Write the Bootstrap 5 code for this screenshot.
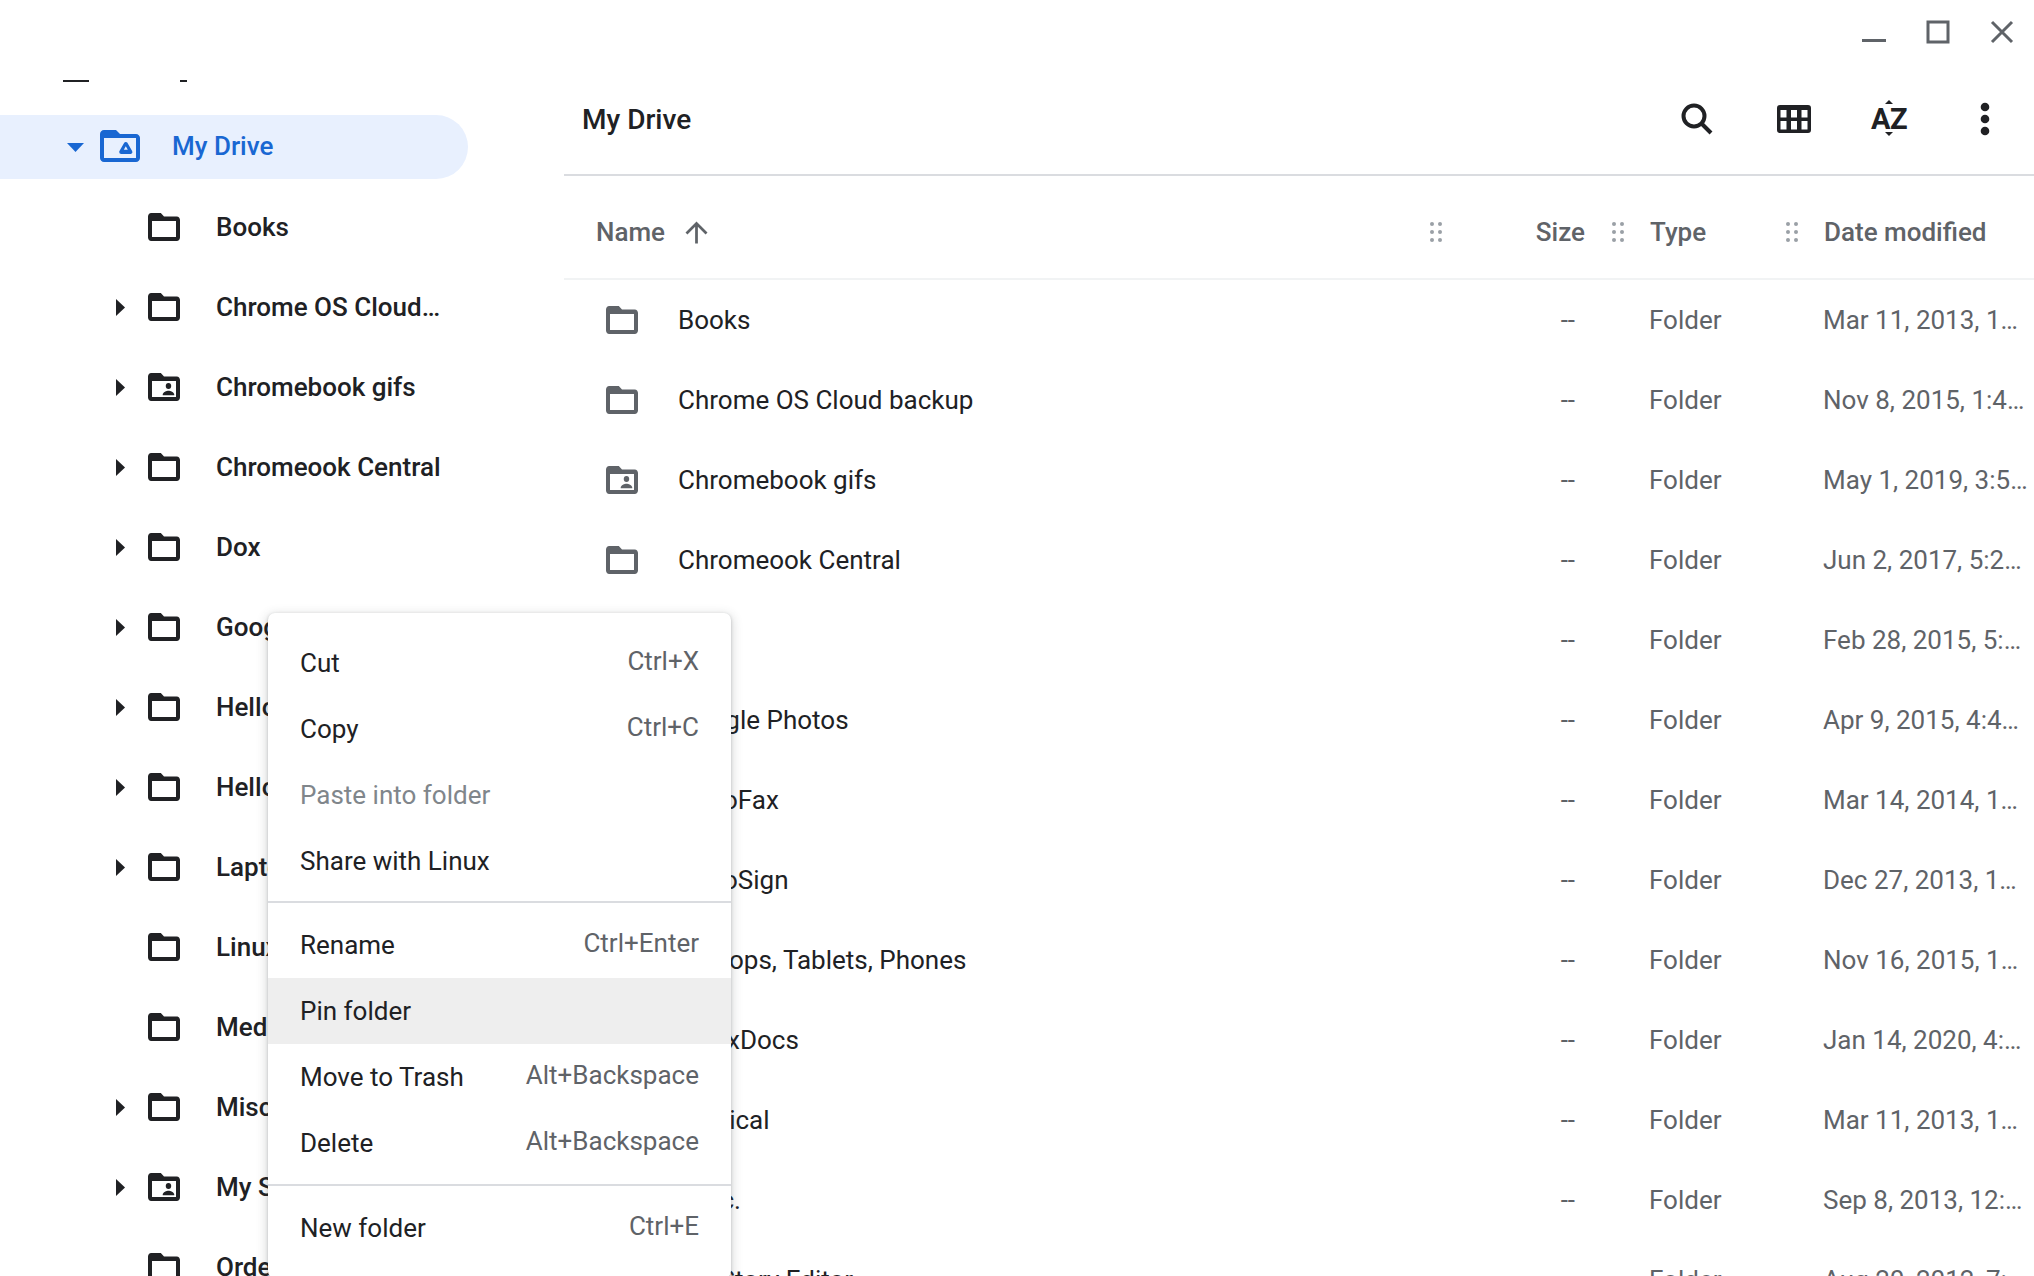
<!DOCTYPE html>
<html lang="en">
<head>
<meta charset="utf-8">
<title>My Drive</title>
<link href="https://cdn.jsdelivr.net/npm/bootstrap@5.3.0/dist/css/bootstrap.min.css" rel="stylesheet">
<style>
html,body{height:100%;overflow:hidden;background:#fff}
body{font-family:Roboto,"Liberation Sans",sans-serif;font-size:26px;color:#202124;line-height:1.2}
.shell{height:1276px}
.tree{width:564px;color:#202124;font-weight:500}
.stub{margin-top:80px;height:2px}
.stub i{display:block;height:2px;background:#202124}
.stub-a{width:26px;margin-left:63px}
.stub-b{width:7px;margin-left:91px}
.drive-row{height:64px;width:468px;margin-top:33px;margin-bottom:8px;padding-left:67px;background:#e8f0fe;color:#1967d2;border-radius:0 32px 32px 0}
.drive-label{margin-left:32px}
.drive-caret{width:17px;height:9px;margin-right:16px}
.drive-ico{width:40px;height:32px;margin-top:-2px}
.node{height:80px;padding-left:116px}
.node-caret{width:9px;height:17px;flex:none;margin-right:23px}
.node-ico{width:32px;height:28px;flex:none;margin-right:36px}
.node-label{max-width:227px;padding-top:2px}
.pane{min-width:0}
.winbar{height:64px}
.winbtn{width:64px;height:64px}
.winbtn svg{width:24px;height:24px;color:#5f6368}
.toolbar{height:112px;padding-left:18px;border-bottom:2px solid #dadce0}
.pane-title{font-weight:500;margin-bottom:0;font-size:28px;padding-top:2px}
.tool{width:96px;height:64px}
.tool-bar-end{margin-right:1px}
.ic-search{width:32px;height:32px}
.ic-grid{width:34px;height:28px;margin-left:2px}
.ic-dots{width:10px;height:34px}
.sort-az{font-weight:700;font-size:29px;letter-spacing:-.5px;line-height:28px;height:28px}
.sort-az::before,.sort-az::after{content:"";position:absolute;left:50%;margin-left:-4px;border:4px solid transparent}
.sort-az::before{top:-5px;border-bottom:4px solid #202124;border-top:0}
.sort-az::after{bottom:-3px;border-top:4px solid #202124;border-bottom:0}
.head-row{height:104px;padding-top:10px;border-bottom:2px solid #f1f3f4;color:#5f6368;font-weight:500}
.head-txt{padding-top:2px}
.file-row{height:80px;color:#5f6368}
.cell-name{width:916px;flex:none}
.cell-size{width:121px;flex:none}
.cell-type{width:174px;flex:none}
.cell-date{width:259px;flex:none;min-width:0}
.head-name{padding-left:32px}
.head-size{padding-right:16px}
.grip{width:12px;height:20px;color:#9aa0a6;flex:none}
.grip-gap{margin-left:11px;margin-right:26px}
.grip-last{margin-right:38px}
.sort-up{width:33px;height:33px;margin-left:15px;color:#5f6368}
.file-ico{width:32px;height:28px;margin-left:42px;margin-right:40px;flex:none;color:#5f6368}
.file-label{color:#202124;padding-top:2px}
.dash{padding-right:26px;padding-top:2px}
.type-txt{padding-left:48px;padding-top:2px}
.date-txt{padding-left:48px;padding-right:6px;padding-top:2px}
.ctx-menu.dropdown-menu{position:absolute;left:268px;top:613px;width:463px;height:665px;padding:17px 0;margin:0;border:0;border-radius:7px;font-size:26px;color:#202124;box-shadow:0 1px 3px rgba(60,64,67,.3),0 3px 10px 3px rgba(60,64,67,.15)}
.ctx-menu .dropdown-item{height:66px;padding:0 32px;color:#202124}
.ctx-menu .dropdown-item span{padding-top:2px}
.ctx-menu .dropdown-item.disabled{color:#80868b}
.ctx-menu .dropdown-item.hot{background:#eeeeee;color:#202124}
.ctx-menu .dropdown-divider{margin:7px 0 9px;border-top:2px solid #dadce0;opacity:1}
.ctx-menu .dropdown-divider:last-of-type{margin:8px 0 9px}
.ctx-menu .dropdown-item .keys{color:#5f6368;margin-bottom:4px}
</style>
</head>
<body>
<svg width="0" height="0" class="position-absolute">
  <symbol id="folder" viewBox="2 4 20 16" preserveAspectRatio="none"><path fill="currentColor" fill-rule="evenodd" d="M10 4H4c-1.100 0-2 .9-2 2v12c0 1.100.9 2 2 2h16c1.100 0 2-.9 2-2V8c0-1.100-.9-2-2-2h-8l-2-2zM19.500 17.700H4.500V8.600h15z"/></symbol>
  <symbol id="shared" viewBox="2 4 20 16" preserveAspectRatio="none"><path fill="currentColor" fill-rule="evenodd" d="M10 4H4c-1.100 0-2 .9-2 2v12c0 1.100.9 2 2 2h16c1.100 0 2-.9 2-2V8c0-1.100-.9-2-2-2h-8l-2-2zM19.500 17.700H4.500V8.600h15z"/><circle fill="currentColor" cx="14.800" cy="11.400" r="1.700"/><path fill="currentColor" d="M11.200 16.300c0-1.500 2.500-2.200 3.600-2.200s3.600.7 3.600 2.200v.4h-7.200z"/></symbol>
  <symbol id="caret" viewBox="0 0 9 17"><path fill="currentColor" d="M0 0l9 8.500L0 17z"/></symbol>
  <symbol id="grip" viewBox="0 0 12 20"><g fill="currentColor"><circle cx="2" cy="2" r="2"/><circle cx="10" cy="2" r="2"/><circle cx="2" cy="10" r="2"/><circle cx="10" cy="10" r="2"/><circle cx="2" cy="18" r="2"/><circle cx="10" cy="18" r="2"/></g></symbol>
</svg>

<div class="shell d-flex overflow-hidden position-relative">
  <nav class="tree flex-shrink-0 overflow-hidden">
    <div class="stub"><i class="stub-a float-start"></i><i class="stub-b float-start"></i></div>
    <div class="drive-row d-flex align-items-center">
      <svg class="drive-caret" viewBox="0 0 17 9"><path fill="currentColor" d="M0 0h17L8.500 9z"/></svg>
      <svg class="drive-ico" viewBox="2 4 20 16"><path fill="currentColor" fill-rule="evenodd" d="M10 4H4c-1.100 0-2 .9-2 2v12c0 1.100.9 2 2 2h16c1.100 0 2-.9 2-2V8c0-1.100-.9-2-2-2h-8l-2-2zM20 18H4V8h16z"/><path fill="currentColor" stroke="currentColor" stroke-width="2" stroke-linejoin="round" d="M14.900 11l2.300 4h-4.600z"/><path fill="#e8f0fe" d="M14.900 12.100l1 1.800h-2z"/></svg>
      <span class="drive-label">My Drive</span>
    </div>
    <div class="node d-flex align-items-center"><span class="node-caret"></span><svg class="node-ico"><use href="#folder"/></svg><span class="node-label text-truncate">Books</span></div>
    <div class="node d-flex align-items-center"><svg class="node-caret"><use href="#caret"/></svg><svg class="node-ico"><use href="#folder"/></svg><span class="node-label text-truncate">Chrome OS Cloud backup</span></div>
    <div class="node d-flex align-items-center"><svg class="node-caret"><use href="#caret"/></svg><svg class="node-ico"><use href="#shared"/></svg><span class="node-label text-truncate">Chromebook gifs</span></div>
    <div class="node d-flex align-items-center"><svg class="node-caret"><use href="#caret"/></svg><svg class="node-ico"><use href="#folder"/></svg><span class="node-label text-truncate">Chromeook Central</span></div>
    <div class="node d-flex align-items-center"><svg class="node-caret"><use href="#caret"/></svg><svg class="node-ico"><use href="#folder"/></svg><span class="node-label text-truncate">Dox</span></div>
    <div class="node d-flex align-items-center"><svg class="node-caret"><use href="#caret"/></svg><svg class="node-ico"><use href="#folder"/></svg><span class="node-label text-truncate">Google Photos</span></div>
    <div class="node d-flex align-items-center"><svg class="node-caret"><use href="#caret"/></svg><svg class="node-ico"><use href="#folder"/></svg><span class="node-label text-truncate">HelloFax</span></div>
    <div class="node d-flex align-items-center"><svg class="node-caret"><use href="#caret"/></svg><svg class="node-ico"><use href="#folder"/></svg><span class="node-label text-truncate">HelloSign</span></div>
    <div class="node d-flex align-items-center"><svg class="node-caret"><use href="#caret"/></svg><svg class="node-ico"><use href="#folder"/></svg><span class="node-label text-truncate">Laptops, Tablets, Phones</span></div>
    <div class="node d-flex align-items-center"><span class="node-caret"></span><svg class="node-ico"><use href="#folder"/></svg><span class="node-label text-truncate">LinuxDocs</span></div>
    <div class="node d-flex align-items-center"><span class="node-caret"></span><svg class="node-ico"><use href="#folder"/></svg><span class="node-label text-truncate">Medical</span></div>
    <div class="node d-flex align-items-center"><svg class="node-caret"><use href="#caret"/></svg><svg class="node-ico"><use href="#folder"/></svg><span class="node-label text-truncate">Misc.</span></div>
    <div class="node d-flex align-items-center"><svg class="node-caret"><use href="#caret"/></svg><svg class="node-ico"><use href="#shared"/></svg><span class="node-label text-truncate">My Story Editor</span></div>
    <div class="node d-flex align-items-center"><span class="node-caret"></span><svg class="node-ico"><use href="#folder"/></svg><span class="node-label text-truncate">Orders</span></div>
  </nav>

  <main class="pane flex-grow-1 d-flex flex-column overflow-hidden">
    <div class="winbar d-flex justify-content-end flex-shrink-0">
      <div class="winbtn d-flex align-items-center justify-content-center"><svg viewBox="0 0 24 24"><rect fill="currentColor" x="0" y="19" width="24" height="3"/></svg></div>
      <div class="winbtn d-flex align-items-center justify-content-center"><svg viewBox="0 0 24 24"><rect fill="none" stroke="currentColor" stroke-width="3" x="2" y="2" width="20" height="20"/></svg></div>
      <div class="winbtn d-flex align-items-center justify-content-center"><svg viewBox="0 0 24 24"><path fill="none" stroke="currentColor" stroke-width="3" d="M2 2l20 20M22 2L2 22"/></svg></div>
    </div>
    <header class="toolbar d-flex align-items-center flex-shrink-0">
      <h1 class="pane-title">My Drive</h1>
      <div class="d-flex align-items-center ms-auto tool-bar-end">
        <div class="tool d-flex align-items-center justify-content-center"><svg class="ic-search" viewBox="0 0 32 32"><circle cx="13" cy="13" r="10.500" fill="none" stroke="#202124" stroke-width="4"/><path d="M20.500 20.500L30 30" fill="none" stroke="#202124" stroke-width="4"/></svg></div>
        <div class="tool d-flex align-items-center justify-content-center"><svg class="ic-grid" viewBox="0 0 34 28"><path fill="#202124" fill-rule="evenodd" d="M3 0h28a3 3 0 0 1 3 3v22a3 3 0 0 1-3 3H3a3 3 0 0 1-3-3V3a3 3 0 0 1 3-3zM3.500 5v7.500h6V5zm10.500 0v7.500h6V5zm10.500 0v7.500h6V5zM3.500 16v8.500h6V16zM14 16v8.500h6V16zm10.500 0v8.500h6V16z"/></svg></div>
        <div class="tool d-flex align-items-center justify-content-center"><span class="sort-az position-relative">AZ</span></div>
        <div class="tool d-flex align-items-center justify-content-center"><svg class="ic-dots" viewBox="0 0 10 34"><g fill="#202124"><circle cx="5" cy="5" r="4.300"/><circle cx="5" cy="17" r="4.300"/><circle cx="5" cy="29" r="4.300"/></g></svg></div>
      </div>
    </header>
    <div class="head-row d-flex align-items-center flex-shrink-0">
      <div class="cell-name head-name d-flex align-items-center"><span class="head-txt">Name</span><svg class="sort-up" viewBox="0 0 24 24"><path fill="currentColor" d="M4 12l1.410 1.410L11 7.830V20h2V7.830l5.580 5.590L20 12l-8-8-8 8z"/></svg><svg class="grip ms-auto grip-last"><use href="#grip"/></svg></div>
      <div class="cell-size head-size head-txt text-end">Size</div>
      <div class="cell-type d-flex align-items-center"><svg class="grip grip-gap"><use href="#grip"/></svg><span class="head-txt">Type</span></div>
      <div class="cell-date d-flex align-items-center"><svg class="grip grip-gap"><use href="#grip"/></svg><span class="head-txt">Date modified</span></div>
    </div>
    <div class="file-row d-flex align-items-center flex-shrink-0"><div class="cell-name d-flex align-items-center"><svg class="file-ico"><use href="#folder"/></svg><span class="file-label">Books</span></div><div class="cell-size dash text-end">--</div><div class="cell-type type-txt">Folder</div><div class="cell-date date-txt text-truncate">Mar 11, 2013, 11:36 AM</div></div>
    <div class="file-row d-flex align-items-center flex-shrink-0"><div class="cell-name d-flex align-items-center"><svg class="file-ico"><use href="#folder"/></svg><span class="file-label">Chrome OS Cloud backup</span></div><div class="cell-size dash text-end">--</div><div class="cell-type type-txt">Folder</div><div class="cell-date date-txt text-truncate">Nov 8, 2015, 1:42 PM</div></div>
    <div class="file-row d-flex align-items-center flex-shrink-0"><div class="cell-name d-flex align-items-center"><svg class="file-ico"><use href="#shared"/></svg><span class="file-label">Chromebook gifs</span></div><div class="cell-size dash text-end">--</div><div class="cell-type type-txt">Folder</div><div class="cell-date date-txt text-truncate">May 1, 2019, 3:51 PM</div></div>
    <div class="file-row d-flex align-items-center flex-shrink-0"><div class="cell-name d-flex align-items-center"><svg class="file-ico"><use href="#folder"/></svg><span class="file-label">Chromeook Central</span></div><div class="cell-size dash text-end">--</div><div class="cell-type type-txt">Folder</div><div class="cell-date date-txt text-truncate">Jun 2, 2017, 5:24 PM</div></div>
    <div class="file-row d-flex align-items-center flex-shrink-0"><div class="cell-name d-flex align-items-center"><svg class="file-ico"><use href="#folder"/></svg><span class="file-label">Dox</span></div><div class="cell-size dash text-end">--</div><div class="cell-type type-txt">Folder</div><div class="cell-date date-txt text-truncate">Feb 28, 2015, 5:12 PM</div></div>
    <div class="file-row d-flex align-items-center flex-shrink-0"><div class="cell-name d-flex align-items-center"><svg class="file-ico"><use href="#folder"/></svg><span class="file-label">Google Photos</span></div><div class="cell-size dash text-end">--</div><div class="cell-type type-txt">Folder</div><div class="cell-date date-txt text-truncate">Apr 9, 2015, 4:41 PM</div></div>
    <div class="file-row d-flex align-items-center flex-shrink-0"><div class="cell-name d-flex align-items-center"><svg class="file-ico"><use href="#folder"/></svg><span class="file-label">HelloFax</span></div><div class="cell-size dash text-end">--</div><div class="cell-type type-txt">Folder</div><div class="cell-date date-txt text-truncate">Mar 14, 2014, 10:20 AM</div></div>
    <div class="file-row d-flex align-items-center flex-shrink-0"><div class="cell-name d-flex align-items-center"><svg class="file-ico"><use href="#folder"/></svg><span class="file-label">HelloSign</span></div><div class="cell-size dash text-end">--</div><div class="cell-type type-txt">Folder</div><div class="cell-date date-txt text-truncate">Dec 27, 2013, 12:08 PM</div></div>
    <div class="file-row d-flex align-items-center flex-shrink-0"><div class="cell-name d-flex align-items-center"><svg class="file-ico"><use href="#folder"/></svg><span class="file-label">Laptops, Tablets, Phones</span></div><div class="cell-size dash text-end">--</div><div class="cell-type type-txt">Folder</div><div class="cell-date date-txt text-truncate">Nov 16, 2015, 10:15 AM</div></div>
    <div class="file-row d-flex align-items-center flex-shrink-0"><div class="cell-name d-flex align-items-center"><svg class="file-ico"><use href="#folder"/></svg><span class="file-label">LinuxDocs</span></div><div class="cell-size dash text-end">--</div><div class="cell-type type-txt">Folder</div><div class="cell-date date-txt text-truncate">Jan 14, 2020, 4:33 PM</div></div>
    <div class="file-row d-flex align-items-center flex-shrink-0"><div class="cell-name d-flex align-items-center"><svg class="file-ico"><use href="#folder"/></svg><span class="file-label">Medical</span></div><div class="cell-size dash text-end">--</div><div class="cell-type type-txt">Folder</div><div class="cell-date date-txt text-truncate">Mar 11, 2013, 11:40 AM</div></div>
    <div class="file-row d-flex align-items-center flex-shrink-0"><div class="cell-name d-flex align-items-center"><svg class="file-ico"><use href="#folder"/></svg><span class="file-label">Misc.</span></div><div class="cell-size dash text-end">--</div><div class="cell-type type-txt">Folder</div><div class="cell-date date-txt text-truncate">Sep 8, 2013, 12:52 PM</div></div>
    <div class="file-row d-flex align-items-center flex-shrink-0"><div class="cell-name d-flex align-items-center"><svg class="file-ico"><use href="#shared"/></svg><span class="file-label">My Story Editor</span></div><div class="cell-size dash text-end"></div><div class="cell-type type-txt">Folder</div><div class="cell-date date-txt text-truncate">Aug 20, 2012, 7:18 PM</div></div>
  </main>

  <div class="ctx-menu dropdown-menu show">
    <div class="dropdown-item d-flex align-items-center justify-content-between"><span>Cut</span><span class="keys">Ctrl+X</span></div>
    <div class="dropdown-item d-flex align-items-center justify-content-between"><span>Copy</span><span class="keys">Ctrl+C</span></div>
    <div class="dropdown-item disabled d-flex align-items-center justify-content-between"><span>Paste into folder</span></div>
    <div class="dropdown-item d-flex align-items-center justify-content-between"><span>Share with Linux</span></div>
    <hr class="dropdown-divider">
    <div class="dropdown-item d-flex align-items-center justify-content-between"><span>Rename</span><span class="keys">Ctrl+Enter</span></div>
    <div class="dropdown-item hot d-flex align-items-center justify-content-between"><span>Pin folder</span></div>
    <div class="dropdown-item d-flex align-items-center justify-content-between"><span>Move to Trash</span><span class="keys">Alt+Backspace</span></div>
    <div class="dropdown-item d-flex align-items-center justify-content-between"><span>Delete</span><span class="keys">Alt+Backspace</span></div>
    <hr class="dropdown-divider">
    <div class="dropdown-item d-flex align-items-center justify-content-between"><span>New folder</span><span class="keys">Ctrl+E</span></div>
  </div>
</div>
<script src="https://cdn.jsdelivr.net/npm/bootstrap@5.3.0/dist/js/bootstrap.bundle.min.js"></script>
</body>
</html>
